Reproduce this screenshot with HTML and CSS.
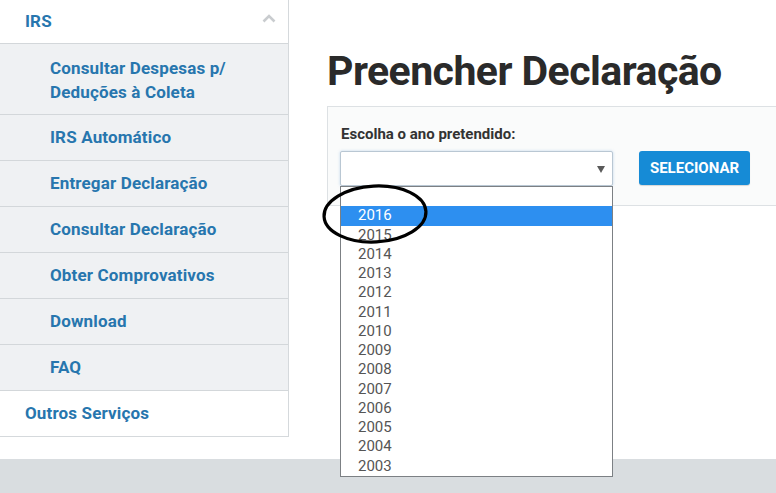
FILE: index.html
```html
<!DOCTYPE html>
<html lang="pt">
<head>
<meta charset="utf-8">
<title>Preencher Declaração</title>
<link rel="stylesheet" href="styles.css">
</head>
<body>
<div class="page">
  <aside class="sidebar">
    <div class="nav-item nav-top">
      <span>IRS</span>
      <svg class="chev" width="14" height="9" viewBox="0 0 14 9"><polyline points="1.5,7.5 7,2 12.5,7.5" fill="none" stroke="#c9cccf" stroke-width="2.6"/></svg>
    </div>
    <div class="nav-sub">Consultar Despesas p/<br>Deduções à Coleta</div>
    <div class="nav-sub">IRS Automático</div>
    <div class="nav-sub">Entregar Declaração</div>
    <div class="nav-sub">Consultar Declaração</div>
    <div class="nav-sub">Obter Comprovativos</div>
    <div class="nav-sub">Download</div>
    <div class="nav-sub">FAQ</div>
    <div class="nav-item nav-last">Outros Serviços</div>
  </aside>
  <main class="main">
    <h1 class="title">Preencher Declaração</h1>
    <div class="card">
      <div class="label">Escolha o ano pretendido:</div>
      <div class="row">
        <div class="select-wrap">
          <div class="select">
            <svg class="arrow" width="8" height="7" viewBox="0 0 8 7"><polygon points="0,0 8,0 4,7" fill="#5a5a5a"/></svg>
          </div>
          <ul class="options">
            <li class="opt"></li>
            <li class="opt selected">2016</li>
            <li class="opt">2015</li>
            <li class="opt">2014</li>
            <li class="opt">2013</li>
            <li class="opt">2012</li>
            <li class="opt">2011</li>
            <li class="opt">2010</li>
            <li class="opt">2009</li>
            <li class="opt">2008</li>
            <li class="opt">2007</li>
            <li class="opt">2006</li>
            <li class="opt">2005</li>
            <li class="opt">2004</li>
            <li class="opt">2003</li>
          </ul>
          <svg class="circle" width="110" height="64" viewBox="0 0 110 64"><ellipse cx="54" cy="31" rx="51" ry="28" fill="none" stroke="#000" stroke-width="3.2" transform="rotate(-3 54 31)"/></svg>
        </div>
        <button class="btn">SELECIONAR</button>
      </div>
    </div>
  </main>
</div>
<footer class="footer"></footer>
</body>
</html>
```
FILE: styles.css
```css
* { box-sizing: border-box; }
html, body { margin: 0; padding: 0; }
body {
  font-family: Roboto, "Liberation Sans", Arial, sans-serif;
  background: #fff;
  overflow: hidden;
  height: 493px;
}
.page {
  display: flex;
  height: 459px;
}
.sidebar {
  width: 289px;
  flex: none;
  align-self: flex-start;
  border-right: 1px solid #d5d9dc;
  border-bottom: 1px solid #d5d9dc;
  background: #fff;
}
.nav-item, .nav-sub {
  font-size: 17px;
  font-weight: 700;
  color: #2776ae;
  line-height: 24px;
  border-bottom: 1px solid #d3d7da;
  letter-spacing: 0.15px;
}
.nav-top {
  display: flex;
  align-items: center;
  justify-content: space-between;
  height: 44px;
  padding: 0 12px 2px 25px;
}
.chev { margin-top: -4px; }
.nav-sub {
  background: #eff1f3;
  padding: 10px 0 11px 50px;
}
.nav-top + .nav-sub {
  padding: 12px 0 10px 50px;
}
.nav-last {
  border-bottom: none;
  padding: 10px 0 11px 25px;
}
.main {
  flex: 1;
  padding-left: 38px;
  min-width: 0;
}
.title {
  margin: 46px 0 10px;
  font-size: 41px;
  line-height: 50px;
  font-weight: 700;
  color: #2a2a2a;
  letter-spacing: -0.55px;
}
.card {
  margin-right: -20px;
  background: #fafbfb;
  border: 1px solid #dde1e4;
  padding: 17px 12px 19px 12px;
}
.label {
  font-size: 15px;
  font-weight: 700;
  line-height: 20px;
  color: #333;
  margin-bottom: 7px;
  padding-left: 1px;
}
.row {
  display: flex;
  align-items: flex-start;
  gap: 26px;
}
.select-wrap {
  position: relative;
  width: 273px;
}
.select {
  height: 35px;
  background: #fff;
  border: 1px solid #b9c7d3;
  border-radius: 2px;
  box-shadow: 0 0 3px rgba(90, 150, 210, 0.35);
  display: flex;
  align-items: center;
  justify-content: flex-end;
  padding-right: 7px;
}
.arrow { margin-top: 1px; }
.options {
  position: absolute;
  left: 0;
  top: 35px;
  width: 273px;
  margin: 0;
  padding: 0;
  list-style: none;
  background: #fff;
  border: 1px solid #7c8084;
  z-index: 5;
}
.opt {
  height: 19.25px;
  line-height: 19.25px;
  font-size: 15px;
  color: #555;
  padding-left: 17px;
}
.opt.selected {
  background: #2d8ff0;
  color: #fff;
}
.circle {
  position: absolute;
  left: -19px;
  top: 32px;
  z-index: 6;
}
.btn {
  width: 111px;
  height: 34px;
  border: none;
  border-radius: 3px;
  background: #168bd6;
  color: #fff;
  font-family: Roboto, "Liberation Sans", Arial, sans-serif;
  font-size: 15px;
  font-weight: 700;
  padding: 0;
  box-shadow: 0 1px 1px rgba(0,0,0,0.15);
}
.footer {
  height: 34px;
  background: #d9dde0;
}
```
